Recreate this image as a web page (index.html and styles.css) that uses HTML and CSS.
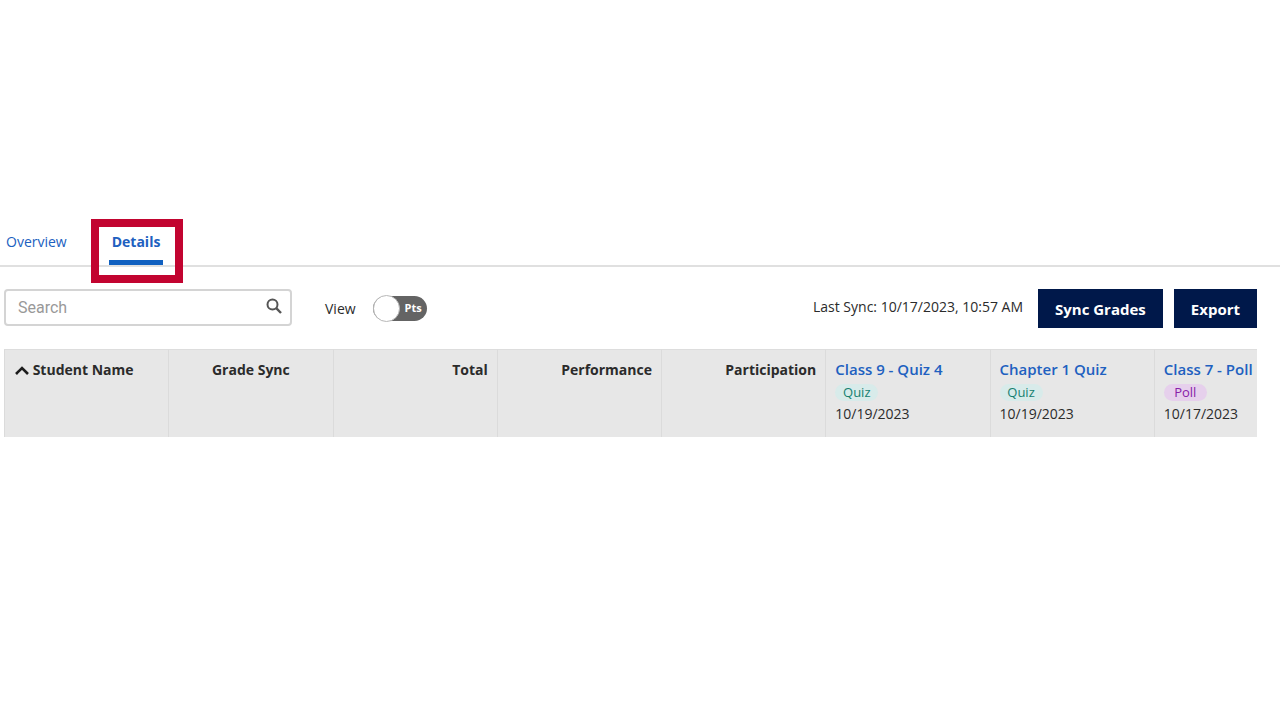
FILE: index.html
```html
<!DOCTYPE html>
<html lang="en">
<head>
    <meta charset="utf-8">
    <title>Grades</title>
    <link rel="stylesheet" href="styles.css">
</head>

<body>
<nav class="tabs">
    <a class="tab" href="#overview">Overview</a>
    <a class="tab active" href="#details">Details<span class="highlight"></span></a>
</nav>

<main id="details">
    <div class="toolbar">
        <div class="searchBox">
            <input type="text" id="search" placeholder="Search" aria-label="Search">
            <button class="searchButton" aria-label="Search">
                <svg width="16" height="16" viewBox="0 0 16 16" fill="none" stroke="#555555" stroke-width="2">
                    <circle cx="6.5" cy="6.5" r="5"/>
                    <path d="M10.2 10.2L15 15" stroke-width="2.4"/>
                </svg>
            </button>
        </div>

        <label class="view">View
            <span class="toggle">
                <input type="checkbox" role="switch">
                <span class="knob"></span>
                <span class="unit">Pts</span>
            </span>
        </label>

        <span class="lastSync">Last Sync: 10/17/2023, 10:57 AM</span>
        <button class="action">Sync Grades</button>
        <button class="action">Export</button>
    </div>

    <div class="tableWrap">
        <table>
            <thead>
                <tr>
                    <th>
                        <svg class="sort" width="14" height="9" viewBox="0 0 14 9" fill="none" stroke="#1c1c1c" stroke-width="2.6">
                            <path d="M1 8L7 2L13 8"/>
                        </svg>
                        Student Name
                    </th>
                    <th class="center">Grade Sync</th>
                    <th class="right">Total</th>
                    <th class="right">Performance</th>
                    <th class="right">Participation</th>
                    <th>
                        <a class="title" href="#">Class 9 - Quiz 4</a>
                        <span class="tag quiz">Quiz</span>
                        <span class="date">10/19/2023</span>
                    </th>
                    <th>
                        <a class="title" href="#">Chapter 1 Quiz</a>
                        <span class="tag quiz">Quiz</span>
                        <span class="date">10/19/2023</span>
                    </th>
                    <th>
                        <a class="title" href="#">Class 7 - Poll</a>
                        <span class="tag poll">Poll</span>
                        <span class="date">10/17/2023</span>
                    </th>
                </tr>
            </thead>
        </table>
    </div>
</main>
</body>
</html>
```
FILE: styles.css
```css
*{
    box-sizing: border-box;
}

body{
    margin: 0;
    padding-top: 227px;
    background-color: #ffffff;
    color: #2b2b2b;
    font-family: "Open Sans", "Noto Sans", sans-serif;
    font-size: 14px;
}

a{
    color: #2060c0;
    text-decoration: none;
}

button{
    cursor: pointer;
}

.tabs{
    display: flex;
    gap: 40px;
    height: 40px;
    padding-left: 4px;
    border-bottom: 2px solid #e0e0e0;
}

.tab{
    height: 38px;
    padding: 0 2px;
    line-height: 30px;
}

.tab.active{
    position: relative;
    padding: 0 3px;
    font-weight: bold;
    border-bottom: 5px solid #1060c0;
}

/* red frame around the selected tab */
.highlight{
    position: absolute;
    top: -8px;
    left: -18px;
    right: -20px;
    bottom: -23px;
    border: 8px solid #c20430;
    pointer-events: none;
}

main{
    padding: 22px 23px 0 4px;
}

.toolbar{
    display: flex;
    align-items: center;
    margin-bottom: 21px;
}

.searchBox{
    display: flex;
    align-items: center;
    width: 288px;
    height: 37px;
    margin-bottom: 2px;
    border: 2px solid #d4d4d4;
    border-radius: 4px;
}

#search{
    flex: 1;
    min-width: 0;
    padding: 0 12px;
    border: none;
    outline: none;
    background: none;
    font-family: Roboto, sans-serif;
    font-size: 16px;
}

#search::placeholder{
    color: #999999;
}

.searchButton{
    display: flex;
    padding: 0 8px 4px;
    border: none;
    background: none;
}

.view{
    display: flex;
    align-items: center;
    gap: 17px;
    margin-left: 33px;
}

.toggle{
    display: flex;
    align-items: center;
    width: 54px;
    height: 25px;
    border-radius: 13px;
    background-color: #646464;
    color: #ffffff;
    font-size: 11px;
    font-weight: bold;
}

.toggle input{
    position: absolute;
    opacity: 0;
}

.knob{
    width: 27px;
    height: 27px;
    margin-right: 5px;
    border: 1px solid #b8b8b8;
    border-radius: 50%;
    background-color: #ffffff;
}

.unit{
    padding-bottom: 2px;
}

.lastSync{
    margin-left: auto;
    margin-right: 4px;
    padding-bottom: 4px;
}

.action{
    height: 39px;
    margin-left: 11px;
    padding: 0 17px;
    border: none;
    background-color: #00184a;
    color: #ffffff;
    font-family: inherit;
    font-size: 15px;
    font-weight: bold;
}

.tableWrap{
    overflow: hidden;
    background-color: #e7e7e7;
}

table{
    width: 1314px;
    table-layout: fixed;
    border-collapse: separate;
    border-spacing: 0;
}

th{
    height: 88px;
    padding: 10px 9px;
    border-top: 1px solid #dddddd;
    border-left: 1px solid #dbdbdb;
    vertical-align: top;
    text-align: left;
    line-height: 20px;
}

.center{
    text-align: center;
}

.right{
    text-align: right;
}

.sort{
    margin-left: 1px;
}

.title{
    display: block;
    font-size: 15px;
    font-weight: 600;
    line-height: 18px;
    white-space: nowrap;
}

.tag{
    display: block;
    width: 43px;
    height: 17px;
    margin: 6px 0 3px;
    border-radius: 9px;
    font-size: 13px;
    font-weight: normal;
    line-height: 16px;
    text-align: center;
}

.quiz{
    background-color: #d8ebea;
    color: #168070;
}

.poll{
    background-color: #e6d0ec;
    color: #8820a8;
}

.date{
    display: block;
    font-weight: normal;
}
```
